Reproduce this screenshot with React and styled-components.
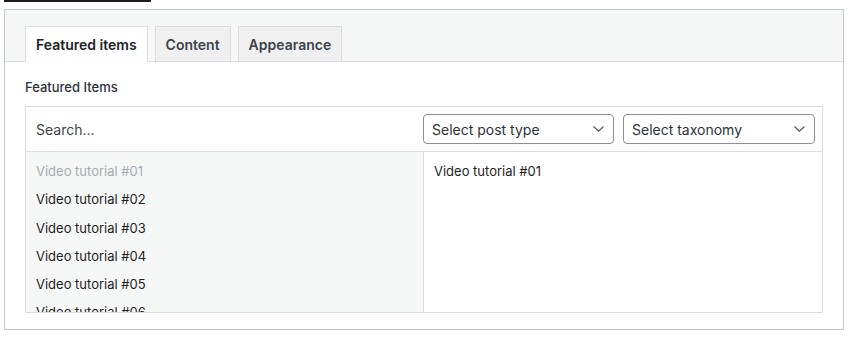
import React from "react";
import styled, { createGlobalStyle } from "styled-components";

const GlobalStyle = createGlobalStyle`
  html, body {
    margin: 0;
    padding: 0;
    background: #fff;
  }
  body {
    font-family: "Inter", "Noto Sans", sans-serif;
    color: #1e1e1e;
  }
`;

const Page = styled.div`
  padding: 0 6px 0 4px;
`;

const TopRule = styled.div`
  width: 147px;
  height: 2px;
  background: #1e1e1e;
  margin-bottom: 7px;
`;

const Box = styled.div`
  box-sizing: border-box;
  width: 840px;
  height: 321px;
  border: 1px solid #c3c4c7;
  display: flex;
  flex-direction: column;
`;

const TabBar = styled.div`
  display: flex;
  gap: 7px;
  align-items: flex-end;
  padding: 0 20px;
  background: #f6f7f7;
  border-bottom: 1px solid #dcdcde;
  box-sizing: border-box;
  height: 52px;
`;

const Tab = styled.button`
  box-sizing: border-box;
  height: 36px;
  margin-bottom: -1px;
  padding: 0 10px;
  font-family: inherit;
  font-size: 14px;
  font-weight: 600;
  color: ${(p) => (p.$active ? "#1d2327" : "#3c434a")};
  background: ${(p) => (p.$active ? "#fff" : "#f0f0f1")};
  border: 1px solid #dcdcde;
  border-bottom-color: ${(p) => (p.$active ? "#fff" : "#dcdcde")};
  cursor: pointer;
`;

const Body = styled.div`
  padding: 16px 20px 0;
`;

const Label = styled.div`
  font-size: 13px;
  font-weight: 500;
  line-height: 18px;
  color: #2c3338;
  margin-bottom: 10px;
`;

const Panel = styled.div`
  box-sizing: border-box;
  width: 798px;
  height: 207px;
  border: 1px solid #dcdcde;
  display: flex;
  flex-direction: column;
`;

const Toolbar = styled.div`
  display: flex;
  align-items: center;
  height: 44px;
  padding: 0 7px 0 0;
  border-bottom: 1px solid #dcdcde;
  gap: 9px;
`;

const Search = styled.input`
  flex: 1;
  min-width: 0;
  height: 100%;
  border: none;
  outline: none;
  padding: 0 10px;
  font-family: inherit;
  font-size: 14px;
  color: #1e1e1e;
  background: transparent;
  &::placeholder {
    color: #3c434a;
  }
`;

const SelectBox = styled.div`
  box-sizing: border-box;
  width: ${(p) => p.$w}px;
  height: 30px;
  border: 1px solid #8c8f94;
  border-radius: 4px;
  display: flex;
  align-items: center;
  justify-content: space-between;
  padding: 0 9px 0 8px;
  font-size: 14px;
  color: #2c3338;
  background: #fff;
`;

const Columns = styled.div`
  flex: 1;
  display: flex;
  min-height: 0;
`;

const ListCol = styled.div`
  width: 397px;
  background: #f6f7f7;
  border-right: 1px solid #dcdcde;
  overflow: hidden;
  padding-top: 5px;
`;

const Chosen = styled.div`
  flex: 1;
  padding-top: 5px;
  background: #fff;
`;

const Item = styled.div`
  height: 28.25px;
  line-height: 28px;
  padding: 0 10px;
  font-size: 13px;
  color: ${(p) => (p.$disabled ? "#a7aaad" : "#1e1e1e")};
`;

const Chevron = () => (
  <svg width="11" height="6" viewBox="0 0 11 6" fill="none">
    <path d="M0.5 0.5L5.5 5.2L10.5 0.5" stroke="#50575e" strokeWidth="1.1" />
  </svg>
);

const Select = ({ label, width }) => (
  <SelectBox $w={width}>
    <span>{label}</span>
    <Chevron />
  </SelectBox>
);

const items = ["01", "02", "03", "04", "05", "06"];

export default function App() {
  return (
    <Page>
      <GlobalStyle />
      <TopRule />
      <Box>
        <TabBar>
          <Tab $active>Featured items</Tab>
          <Tab>Content</Tab>
          <Tab>Appearance</Tab>
        </TabBar>
        <Body>
          <Label>Featured Items</Label>
          <Panel>
            <Toolbar>
              <Search placeholder="Search..." />
              <Select label="Select post type" width={191} />
              <Select label="Select taxonomy" width={192} />
            </Toolbar>
            <Columns>
              <ListCol>
                {items.map((n, i) => (
                  <Item key={n} $disabled={i === 0}>
                    Video tutorial #{n}
                  </Item>
                ))}
              </ListCol>
              <Chosen>
                <Item>Video tutorial #01</Item>
              </Chosen>
            </Columns>
          </Panel>
        </Body>
      </Box>
    </Page>
  );
}
